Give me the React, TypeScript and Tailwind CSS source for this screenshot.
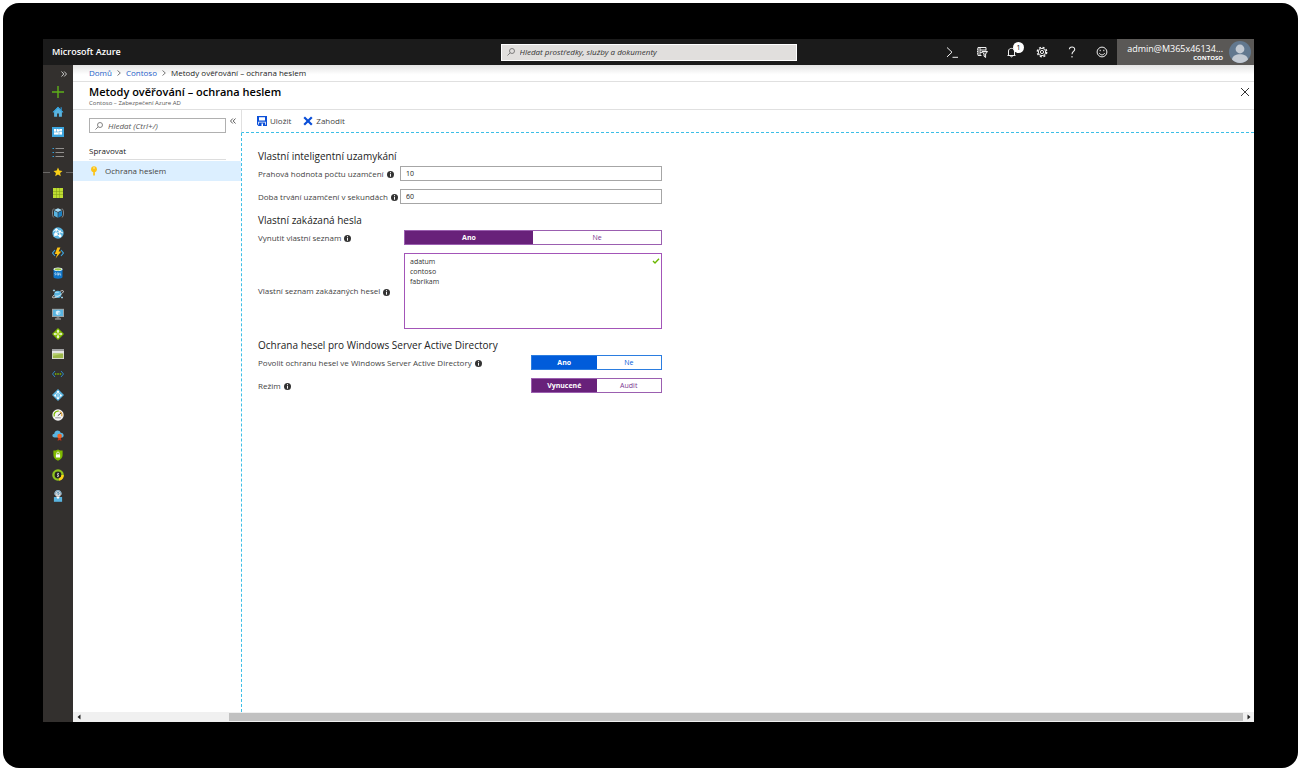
import React, { useState } from 'react';
import clsx from 'clsx';

const icon = 'block size-3 shrink-0';

const PlusIcon = () => (
  <svg viewBox="0 0 12 12" className={icon}>
    <path d="M6 0v12M0 6h12" stroke="#5eb01a" strokeWidth="1.4" />
  </svg>
);

const HomeIcon = () => (
  <svg viewBox="0 0 12 12" className={icon}>
    <path d="M8.6 1.2h1.2v3H8.6z" fill="#2e8fc9" />
    <path d="M6 .8.6 6.2h1.5v4.6h3V7.5h1.8v3.3h3V6.2h1.5z" fill="#59b4e0" />
    <path d="M6 .8.6 6.2h1.2L6 2.2l4.2 4h1.2z" fill="#2f9fdc" />
  </svg>
);

const DashboardIcon = () => (
  <svg viewBox="0 0 12 12" className={icon}>
    <path d="M0 1h12v10H0z" fill="#3ea6df" />
    <path d="M2 3h8v5.6H2z" fill="#fff" />
    <path d="M4.5 3v3M2 6h4M7 5v3.600M7 5.300h3M7 3v1" stroke="#3ea6df" strokeWidth=".6" />
  </svg>
);

const ListIcon = () => (
  <svg viewBox="0 0 12 12" className={icon}>
    <path d="M3.5 2.5H12M3.5 6.5H12M3.5 10.5H12" stroke="#92908e" />
    <path d="M.5 2.5H2M.5 6.5H2M.5 10.5H2" stroke="#2f9fdc" />
  </svg>
);

const StarIcon = () => (
  <svg viewBox="0 0 12 12" className={icon}>
    <path d="m6 1.600 1.300 3 3.200.3-2.400 2.100.7 3.200L6 8.500l-2.800 1.700.7-3.200-2.400-2.100 3.200-.3z" fill="#fcd116" />
  </svg>
);

const GridIcon = () => (
  <svg viewBox="0 0 12 12" className={icon}>
    <path d="M1 1h10v10H1z" fill="#7d9a18" />
    <path d="M1 1h3v3H1zM4.500 1h3v3h-3zM8 1h3v3H8zM1 4.500h3v3H1zM4.500 4.500h3v3h-3zM8 4.500h3v3H8zM1 8h3v3H1zM4.500 8h3v3h-3zM8 8h3v3H8z" fill="#bedc32" />
  </svg>
);

const CubeIcon = () => (
  <svg viewBox="0 0 12 12" className={icon}>
    <path d="M1.900 1.500C-.1 3-.1 9 1.900 10.500M10.100 1.500c2 1.500 2 7.500 0 9" fill="none" stroke="#8c9399" strokeWidth=".9" />
    <path d="m6 1.300 4 1.800L6 5 2 3.100z" fill="#a6dbf5" />
    <path d="M2 3.700 5.700 5.500v5.200L2 8.800z" fill="#59b4e0" />
    <path d="M10 3.700 6.300 5.500v5.200L10 8.800z" fill="#1b7fc0" />
  </svg>
);

const GlobeIcon = () => (
  <svg viewBox="0 0 12 12" className={icon}>
    <circle cx="6" cy="6" r="5.700" fill="#59b4e0" />
    <path d="M1.400 4.500 4.500 2l3 2.500L11 6M4.500 2l-.8 5L2 9.600M3.700 7l3.800-2.500L8 9.400M3.700 7 8 9.400" fill="none" stroke="#fff" strokeWidth=".9" />
    <circle cx="3.800" cy="7.200" r="1.700" fill="#fff" />
    <circle cx="8.100" cy="9" r="1.400" fill="#fff" />
    <circle cx="4.400" cy="2.600" r="1.200" fill="#fff" />
    <circle cx="8" cy="4.300" r="1" fill="#fff" />
  </svg>
);

const FunctionIcon = () => (
  <svg viewBox="0 0 12 12" className={icon}>
    <path d="M3 3 .6 6 3 9M9 3l2.400 3L9 9" fill="none" stroke="#3ea6df" strokeWidth="1.100" />
    <path d="M5.400.4h3L6.600 4.400h2.600L3.600 11.600 5.200 7H2.800z" fill="#fcc316" />
  </svg>
);

const SqlIcon = () => (
  <svg viewBox="0 0 12 12" className={icon}>
    <path d="M1.500 2.200v7.900c0 .9 2 1.600 4.500 1.600s4.500-.7 4.500-1.600V2.200z" fill="#0f75c8" />
    <ellipse cx="6" cy="2.200" rx="4.500" ry="1.800" fill="#e6f2fa" />
    <ellipse cx="6" cy="2.300" rx="3.400" ry="1.100" fill="#9bc53d" />
    <path d="M3.900 5.800c-1.400-.3-1.400 1-.6 1.200.9.2.7 1.300-.6 1M5.900 5.700c-1.300 0-1.300 2.400 0 2.400s1.300-2.400 0-2.400m.3 1.900.8.8M8 5.600V8h1.200" fill="none" stroke="#fff" strokeWidth=".6" />
  </svg>
);

const CosmosIcon = () => (
  <svg viewBox="0 0 12 12" className={icon}>
    <circle cx="5.800" cy="6.300" r="3.600" fill="#59b4e0" />
    <path d="M3 4.400h3.800M2.500 8h4.200" stroke="#a6dbf5" />
    <path d="M2.200 6.900C-.6 9.500.2 10.600 4 9.200s8.200-5 7.300-6.300c-.3-.6-1.500-.4-3 .4" fill="none" stroke="#e6e6e6" strokeWidth=".9" />
    <path d="M2 1.400v2.200M.9 2.500h2.200M10 8.500v2M9 9.500h2" stroke="#a6dbf5" strokeWidth=".8" />
  </svg>
);

const MonitorIcon = () => (
  <svg viewBox="0 0 12 12" className={icon}>
    <path d="M0 .8h12V9H0z" fill="#a0a1a2" />
    <path d="M1 1.700h10v6.400H1z" fill="#59b4e0" />
    <path d="M4.800 9h2.400l.5 1.600H4.300z" fill="#7a7a7a" />
    <path d="M3 10.500h6v1H3z" fill="#b5b5b5" />
    <path d="m6 2.400 2.200 1.200v2.500L6 7.300 3.800 6.100V3.600z" fill="#d6effb" />
    <path d="M6 4.800v2.500l2.200-1.200V3.600z" fill="#8fd0f0" />
  </svg>
);

const LoadBalancerIcon = () => (
  <svg viewBox="0 0 12 12" className={icon}>
    <path d="m6 0 6 6-6 6-6-6z" fill="#7fba00" />
    <path d="M6 1.600 7.500 3.400H6.600v5.200h.9L6 10.400 4.500 8.600h.9V3.400h-.9zM1.600 6l1.800-1.500v.9h5.200v-.9L10.400 6 8.600 7.500v-.9H3.400v.9z" fill="#fff" />
    <circle cx="6" cy="6" r="1.300" fill="#b8d432" />
  </svg>
);

const StorageIcon = () => (
  <svg viewBox="0 0 12 12" className={icon}>
    <path d="M0 1h12v10H0z" fill="#e4e4e4" />
    <path d="M0 1h12v2H0z" fill="#a0a1a2" />
    <path d="M.8 5.500h10.400v4.700H.8z" fill="#9db84a" />
    <path d="M.8 5.500h10.400L.8 8z" fill="#b5cf6b" />
  </svg>
);

const VnetIcon = () => (
  <svg viewBox="0 0 12 12" className={icon}>
    <path d="M3 3 .5 6 3 9M9 3l2.500 3L9 9" fill="none" stroke="#2f86c4" />
    <path d="M2.900 6h1.500M5.300 6h1.500M7.700 6h1.500" stroke="#7fba00" strokeWidth="1.300" />
  </svg>
);

const DirectoryIcon = () => (
  <svg viewBox="0 0 12 12" className={icon}>
    <path d="m6 0 6 6-6 6-6-6z" fill="#59b4e0" />
    <path d="M6 2.500v7M6 2.500 2.900 6.500 6 9.500l3.100-3z" fill="none" stroke="#d9f1fc" strokeWidth=".8" />
    <circle cx="6" cy="2.800" r="1" fill="#fff" />
    <circle cx="3.200" cy="6.500" r="1" fill="#fff" />
    <circle cx="8.800" cy="6.500" r="1" fill="#fff" />
    <circle cx="6" cy="9.200" r="1" fill="#fff" />
  </svg>
);

const GaugeIcon = () => (
  <svg viewBox="0 0 12 12" className={icon}>
    <circle cx="6" cy="6" r="5.700" fill="#f5f5f5" />
    <path d="M2.300 7.400A3.900 3.900 0 0 1 6.800 2.200" fill="none" stroke="#7fba00" strokeWidth="1.300" />
    <path d="M7.600 2.500a3.900 3.900 0 0 1 2.100 4.700" fill="none" stroke="#e0a030" strokeWidth="1.200" />
    <path d="M5.800 6.700 9.200 4" stroke="#444" />
    <path d="M3.200 8.200h5.600v1.200H3.200z" fill="#a0a1a2" />
  </svg>
);

const AdvisorIcon = () => (
  <svg viewBox="0 0 12 12" className={icon}>
    <path d="M2.600 8.600C-.4 8.400-.2 4.800 2.300 4.800 2.600.8 7.800.4 8.600 3.800c3.800-.1 4 4.700.8 4.800z" fill="#59b4e0" />
    <path d="m6.400 8-.8 3.800 1.900-.8 1.900.8L8.800 8z" fill="#c3361a" />
    <circle cx="7.600" cy="7" r="2.300" fill="#f26522" />
  </svg>
);

const ShieldIcon = () => (
  <svg viewBox="0 0 12 12" className={icon}>
    <path d="M6 .4c1.500.9 3 1.200 4.600 1.200v4.600c0 2.600-2 4.300-4.600 5.500-2.600-1.200-4.600-2.900-4.600-5.500V1.600C3 1.600 4.500 1.300 6 .4z" fill="#7fba00" />
    <path d="M3.900 5.300h4.200v3.200H3.900z" fill="#fff" />
    <path d="M4.700 5.300V4.200c0-1.600 2.600-1.600 2.600 0v1.100" fill="none" stroke="#fff" strokeWidth=".8" />
  </svg>
);

const CostIcon = () => (
  <svg viewBox="0 0 12 12" className={icon}>
    <circle cx="6" cy="6" r="4.600" fill="#222" stroke="#8dc21f" strokeWidth="2.400" />
    <path d="M10.600 6A4.600 4.600 0 0 1 7 10.500" fill="none" stroke="#fcd116" strokeWidth="2.400" />
    <path d="M7 4.700c-1.800-.8-2 .9-1 1.300s.8 2-1 1.300M6 3.800v4.400" fill="none" stroke="#fff" strokeWidth=".6" />
  </svg>
);

const SupportIcon = () => (
  <svg viewBox="0 0 12 12" className={icon}>
    <path d="M1.900 7h8.200v4.800H1.900z" fill="#59b4e0" />
    <circle cx="6" cy="4" r="2.900" fill="#d8d8d8" />
    <path d="M2.700 4.600C2.400-.7 9.600-.7 9.300 4.600" fill="none" stroke="#8fb9d3" strokeWidth="1.100" />
    <path d="M5 3.500c0-1.500 2.200-1.300 2 0-.1.700-1 .7-1 1.500" fill="none" stroke="#1b6fa8" strokeWidth=".8" />
    <path d="m4.400 7 1.600 2.200L7.600 7z" fill="#fff" />
  </svg>
);

const services = [
  { name: 'Vytvořit prostředek', Icon: PlusIcon },
  { name: 'Domů', Icon: HomeIcon },
  { name: 'Řídicí panel', Icon: DashboardIcon },
  { name: 'Všechny služby', Icon: ListIcon },
  { name: 'Oblíbené', Icon: StarIcon, divider: true },
  { name: 'Všechny prostředky', Icon: GridIcon },
  { name: 'Skupiny prostředků', Icon: CubeIcon },
  { name: 'App Services', Icon: GlobeIcon },
  { name: 'Function App', Icon: FunctionIcon },
  { name: 'Databáze SQL', Icon: SqlIcon },
  { name: 'Azure Cosmos DB', Icon: CosmosIcon },
  { name: 'Virtuální počítače', Icon: MonitorIcon },
  { name: 'Nástroje pro vyrovnávání zatížení', Icon: LoadBalancerIcon },
  { name: 'Účty úložiště', Icon: StorageIcon },
  { name: 'Virtuální sítě', Icon: VnetIcon },
  { name: 'Azure Active Directory', Icon: DirectoryIcon },
  { name: 'Monitorování', Icon: GaugeIcon },
  { name: 'Advisor', Icon: AdvisorIcon },
  { name: 'Security Center', Icon: ShieldIcon },
  { name: 'Správa nákladů', Icon: CostIcon },
  { name: 'Nápověda a podpora', Icon: SupportIcon },
];

const SearchIcon = () => (
  <svg viewBox="0 0 10 10" className="size-2.5 shrink-0" fill="none" stroke="#666" strokeWidth=".8">
    <circle cx="6" cy="4" r="2.500" />
    <path d="M4.200 5.800 1.500 8.500" />
  </svg>
);

const InfoIcon = () => (
  <svg viewBox="0 0 8 8" className="mt-0.5 size-[7px] shrink-0">
    <circle cx="4" cy="4" r="4" fill="#333" />
    <path d="M4 1.300v1.200M4 3.300v3.200" stroke="#fff" strokeWidth="1.100" />
  </svg>
);

const headerActions = [
  {
    name: 'Cloud Shell',
    drawing: <path d="m1 1.500 5 4.700-5 4.700M6.500 11.300H12" />,
  },
  {
    name: 'Adresář a předplatné',
    drawing: (
      <>
        <path d="M5.500 9.500H2v-8h8v3M4 1.500v8M4 4h6M4 6.600h2M1 3.200h1M1 5.500h1M1 7.800h1" />
        <path d="M6 5.500h5.500L9.600 8v3.500L8 10.200V8z" fill="#fff" fillOpacity=".25" />
      </>
    ),
  },
  {
    name: 'Oznámení',
    badge: 1,
    drawing: <path d="M1.500 9.500h8M2.500 9.500V5c0-3.500 6-3.500 6 0v4.500M4.500 9.800c0 1.500 2 1.500 2 0" />,
  },
  {
    name: 'Nastavení',
    drawing: (
      <>
        <circle cx="6" cy="6" r="1.600" />
        <circle cx="6" cy="6" r="3.700" />
        <circle cx="6" cy="6" r="4.700" strokeWidth="1.400" strokeDasharray="2 1.700" />
      </>
    ),
  },
  {
    name: 'Nápověda',
    drawing: <path d="M3.400 3.200C3.400.2 8.800.3 8.700 3.400 8.600 5.400 6 5.600 6 8.200M6 10v1.400" strokeWidth="1.100" />,
  },
  {
    name: 'Zpětná vazba',
    drawing: (
      <>
        <circle cx="6" cy="6" r="4.900" />
        <path d="M3.400 7c.8 2.500 4.400 2.500 5.200 0M4.200 3.800v1.400M7.800 3.800v1.400" />
      </>
    ),
  },
];

const Header: React.FC = () => (
  <header className="grid h-[26px] shrink-0 grid-cols-[1fr_296px_1fr] items-center bg-[#1b1b1b] text-white">
    <a href="#" className="pl-[9px] text-[9px] leading-4 font-semibold">
      Microsoft Azure
    </a>
    <label className="flex h-[17px] items-center gap-1 border border-white bg-[#e1dfdd] px-1">
      <SearchIcon />
      <input
        type="search"
        aria-label="Hledat"
        placeholder="Hledat prostředky, služby a dokumenty"
        className="min-w-0 flex-1 bg-transparent text-[8px] leading-3 italic outline-none placeholder:text-[#333]"
      />
    </label>
    <div className="flex h-full items-center justify-end">
      {headerActions.map(({ name, badge, drawing }) => (
        <button key={name} type="button" aria-label={name} className="relative flex h-full w-[30px] items-center justify-center">
          <svg viewBox="0 0 12 12" className="size-3" fill="none" stroke="#f0f0f0" strokeWidth="1">
            {drawing}
          </svg>
          {badge && (
            <span className="absolute top-[3px] right-[3px] flex size-[11px] items-center justify-center rounded-full bg-white text-[7px] leading-none text-black">
              {badge}
            </span>
          )}
        </button>
      ))}
      <button type="button" className="flex h-full w-[137px] items-center justify-end gap-1.5 bg-[#5a5856] pr-[3px]">
        <span className="flex flex-col items-end">
          <span className="text-[9px] leading-[11px]">admin@M365x46134...</span>
          <span className="text-[6px] leading-2 font-bold">CONTOSO</span>
        </span>
        <svg viewBox="0 0 22 22" className="size-[22px] shrink-0">
          <circle cx="11" cy="11" r="11" fill="#62788f" />
          <circle cx="11" cy="8" r="4.400" fill="#c3cad3" />
          <path d="M3 18.500c.5-7 15.500-7 16 0a11 11 0 0 1-16 0z" fill="#c3cad3" />
        </svg>
      </button>
    </div>
  </header>
);

const Sidebar: React.FC = () => (
  <nav aria-label="Služby" className="w-[30px] shrink-0 bg-[#33302e]">
    <button type="button" aria-label="Rozbalit nabídku" className="flex h-[17px] w-full items-center justify-end pr-1.5">
      <svg viewBox="0 0 6 6" className="size-1.5" fill="none" stroke="#ddd" strokeWidth=".9">
        <path d="m.5.5 2.300 2.500L.5 5.500M3.200.5 5.500 3 3.200 5.500" />
      </svg>
    </button>
    <ul>
      {services.map(({ name, Icon, divider }) => (
        <li key={name} className="nth-[5n]:mb-px">
          <a href="#" aria-label={name} className="flex h-5 items-center justify-center gap-0.5">
            {divider && <span className="h-px flex-1 bg-[#6a6866]" />}
            <Icon />
            {divider && <span className="h-px flex-1 bg-[#6a6866]" />}
          </a>
        </li>
      ))}
    </ul>
  </nav>
);

const Separator = () => (
  <svg viewBox="0 0 4 6" className="h-1.5 w-1" fill="none" stroke="#555" strokeWidth=".8">
    <path d="m.5.5 2.800 2.500L.5 5.500" />
  </svg>
);

const Menu: React.FC = () => (
  <aside className="w-[168px] shrink-0">
    <div className="flex items-start gap-1 pt-2 pl-4">
      <label className="flex h-[15px] w-[137px] items-center gap-1 border border-[#b0b0b0] px-1">
        <SearchIcon />
        <input
          type="search"
          aria-label="Hledat v nabídce"
          placeholder="Hledat (Ctrl+/)"
          className="min-w-0 flex-1 text-[8px] leading-3 italic outline-none placeholder:text-[#555]"
        />
      </label>
      <button type="button" aria-label="Sbalit nabídku">
        <svg viewBox="0 0 6 6" className="block size-1.5" fill="none" stroke="#333" strokeWidth=".8">
          <path d="M2.800.5.500 3l2.300 2.500M5.500.5 3.200 3l2.300 2.500" />
        </svg>
      </button>
    </div>
    <h2 className="mt-3 mr-[15px] ml-4 border-b border-[#ddd] pb-0.5 text-[8px] leading-3 text-[#222]">Spravovat</h2>
    <a href="#" className="mt-px flex h-5 items-center gap-1.5 bg-[#dcefff] pl-4 text-[8px] leading-3 text-[#444]">
      <svg viewBox="0 0 10 10" className="size-2.5">
        <circle cx="5" cy="3.200" r="2.900" fill="#fcc316" />
        <path d="M4.200 5.500h1.700v3.600l-.9.9-.8-.9z" fill="#fcc316" />
        <circle cx="5" cy="2" r=".8" fill="#fff3c0" />
      </svg>
      Ochrana heslem
    </a>
  </aside>
);

interface ToggleProps {
  label: string;
  options: [string, string];
  tone?: 'purple' | 'blue';
  wide?: boolean;
}

const Toggle: React.FC<ToggleProps> = ({ label, options, tone = 'purple', wide }) => {
  const [value, setValue] = useState(options[0]);

  return (
    <div
      role="group"
      aria-label={label}
      className={clsx(
        'flex h-[15px] shrink-0 border',
        wide ? 'w-[258px]' : 'w-[131px]',
        tone === 'purple' ? 'border-[#9b5fb0]' : 'border-[#2b7de0]'
      )}
    >
      {options.map((option) => (
        <button
          key={option}
          type="button"
          aria-pressed={value === option}
          onClick={() => setValue(option)}
          className={clsx(
            'flex flex-1 items-center justify-center text-[7px] leading-3',
            value === option && 'font-bold text-white',
            value === option && (tone === 'purple' ? 'bg-[#68217a]' : 'bg-[#015cda]'),
            value !== option && (tone === 'purple' ? 'text-[#7a3590]' : 'text-[#015cda]')
          )}
        >
          {option}
        </button>
      ))}
    </div>
  );
};

interface FieldProps {
  label: string;
  htmlFor?: string;
  children: React.ReactNode;
}

const Field: React.FC<FieldProps> = ({ label, htmlFor, children }) => (
  <div className="flex items-center justify-between">
    <span className="flex items-center gap-[3px] text-[8px] leading-3 whitespace-nowrap text-[#444]">
      {htmlFor ? <label htmlFor={htmlFor}>{label}</label> : label}
      <InfoIcon />
    </span>
    {children}
  </div>
);

const Section: React.FC<{ title: string; children: React.ReactNode }> = ({ title, children }) => (
  <section>
    <h2 className="mb-0.5 text-[10px] leading-4 text-[#222]">{title}</h2>
    <div className="flex flex-col gap-2">{children}</div>
  </section>
);

const textBox = 'h-[15px] w-[262px] shrink-0 border border-[#a6a6a6] px-[5px] text-[7px] leading-3 text-[#222]';

const PasswordForm: React.FC = () => (
  <form className="flex max-w-[436px] flex-col gap-2 px-4 pt-[15px]">
    <Section title="Vlastní inteligentní uzamykání">
      <Field label="Prahová hodnota počtu uzamčení" htmlFor="threshold">
        <input id="threshold" type="text" defaultValue="10" className={textBox} />
      </Field>
      <Field label="Doba trvání uzamčení v sekundách" htmlFor="duration">
        <input id="duration" type="text" defaultValue="60" className={textBox} />
      </Field>
    </Section>

    <Section title="Vlastní zakázaná hesla">
      <Field label="Vynutit vlastní seznam">
        <Toggle label="Vynutit vlastní seznam" options={['Ano', 'Ne']} wide />
      </Field>
      <Field label="Vlastní seznam zakázaných hesel" htmlFor="banned">
        <div className="relative">
          <textarea
            id="banned"
            defaultValue={'adatum\ncontoso\nfabrikam'}
            className="block h-[76px] w-[258px] resize-none border border-[#a355b8] px-[5px] py-[3px] text-[7px] leading-[10px] text-[#333]"
          />
          <svg viewBox="0 0 8 8" className="absolute top-1 right-0.5 size-2" fill="none" stroke="#6bb700" strokeWidth="1.400">
            <path d="m1 4 2 2 4-4.200" />
          </svg>
        </div>
      </Field>
    </Section>

    <Section title="Ochrana hesel pro Windows Server Active Directory">
      <Field label="Povolit ochranu hesel ve Windows Server Active Directory">
        <Toggle label="Povolit ochranu hesel" options={['Ano', 'Ne']} tone="blue" />
      </Field>
      <Field label="Režim">
        <Toggle label="Režim" options={['Vynucené', 'Audit']} />
      </Field>
    </Section>
  </form>
);

const Toolbar: React.FC = () => (
  <div className="flex h-[23px] shrink-0 items-center gap-3 border-b border-l border-b-[#3cbfe6] border-l-[#e0e0e0] [border-bottom-style:dashed] pl-[15px] text-[8px] leading-3 text-[#444]">
    <button type="button" className="flex items-center gap-[3px]">
      <svg viewBox="0 0 10 10" className="size-2.5">
        <path d="M0 0h10v10H1.500L0 8.500zM2 1.200v3.300h6V1.200zM1.200 5.700v2.500l.8.600V6.500h6v2.300h.8V5.700zM4.500 7.500V10H6V7.500z" fill="#0b4fd8" fillRule="evenodd" />
      </svg>
      Uložit
    </button>
    <button type="button" className="flex items-center gap-[3px]">
      <svg viewBox="0 0 10 10" className="size-2.5" fill="none" stroke="#0b4fd8" strokeWidth="2.200">
        <path d="m1.200 1.200 7.600 7.600M8.800 1.200 1.200 8.800" />
      </svg>
      Zahodit
    </button>
  </div>
);

const ScrollBar: React.FC = () => (
  <div className="flex h-2.5 shrink-0 items-center bg-[#f0f0f0]">
    <button type="button" aria-label="Posunout doleva" className="flex w-[11px] justify-center">
      <svg viewBox="0 0 4 6" className="h-1.5 w-1">
        <path d="M3.500.5v5L.5 3z" fill="#222" />
      </svg>
    </button>
    <div className="flex flex-1 justify-end">
      <div className="h-2 w-7/8 bg-[#c1c1c1]" />
    </div>
    <button type="button" aria-label="Posunout doprava" className="flex w-[11px] justify-center">
      <svg viewBox="0 0 4 6" className="h-1.5 w-1">
        <path d="M.5.5v5l3-2.500z" fill="#222" />
      </svg>
    </button>
  </div>
);

export default function App() {
  return (
    <div className="flex min-h-screen bg-white p-[3px] pr-0.5 font-['Open_Sans','Noto_Sans',sans-serif]">
      <div className="flex flex-1 flex-col rounded-2xl bg-black pt-9 pr-11 pb-[46px] pl-10">
        <Header />
        <div className="flex flex-1">
          <Sidebar />
          <div className="flex min-w-0 flex-1 flex-col bg-white">
            <nav
              aria-label="Navigace"
              className="flex h-[17px] shrink-0 items-center gap-[5px] border-b border-[#e0e0e0] bg-linear-to-b from-[#e4e4e4] to-white to-60% pl-4 text-[8px] leading-3"
            >
              <a href="#" className="text-[#2560c8]">Domů</a>
              <Separator />
              <a href="#" className="text-[#2560c8]">Contoso</a>
              <Separator />
              <span className="text-[#222]">Metody ověřování – ochrana heslem</span>
            </nav>
            <div className="flex h-7 shrink-0 items-start justify-between border-b border-[#e0e0e0] pt-[3px] pr-1 pl-4">
              <div>
                <h1 className="text-[11px] leading-[14px] font-semibold text-black">Metody ověřování – ochrana heslem</h1>
                <p className="text-[6px] leading-2 text-[#555]">Contoso – Zabezpečení Azure AD</p>
              </div>
              <button type="button" aria-label="Zavřít" className="mt-0.5">
                <svg viewBox="0 0 10 10" className="block size-2.5" stroke="#333" strokeWidth="1">
                  <path d="m1 1 8 8M9 1 1 9" />
                </svg>
              </button>
            </div>
            <div className="flex flex-1">
              <Menu />
              <main className="flex min-w-0 flex-1 flex-col">
                <Toolbar />
                <div className="flex-1 border-l border-dashed border-[#3cbfe6]">
                  <PasswordForm />
                </div>
              </main>
            </div>
            <ScrollBar />
          </div>
        </div>
      </div>
    </div>
  );
}
